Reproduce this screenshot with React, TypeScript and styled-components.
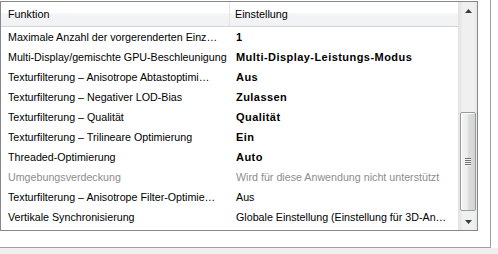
import React from "react";
import styled, { createGlobalStyle } from "styled-components";

const GlobalStyle = createGlobalStyle`
  html, body { margin: 0; padding: 0; background: #ffffff; }
  body { font-family: "Liberation Sans", Arial, sans-serif; }
`;

const Page = styled.div`
  width: 498px;
  height: 254px;
  display: flex;
  flex-direction: column;
  background: #ffffff;
  overflow: hidden;
`;

const Panel = styled.div`
  width: 491px;
  height: 248px;
  border-right: 1px solid #a0a0a0;
  border-bottom: 1px solid #a0a0a0;
  background: #ffffff;
  padding-top: 1px;
  box-sizing: border-box;
`;

const Footer = styled.div`
  flex: 1;
  background: #f0f0f0;
`;

const ListBox = styled.div`
  width: 478px;
  height: 230px;
  box-sizing: border-box;
  border: 1px solid #828790;
  display: flex;
  background: #ffffff;
`;

const Content = styled.div`
  flex: 1;
  display: flex;
  flex-direction: column;
  min-width: 0;
`;

const Header = styled.div`
  height: 25px;
  box-sizing: border-box;
  display: grid;
  grid-template-columns: 229px 1fr;
  background: linear-gradient(#ffffff 0%, #ffffff 45%, #f3f4f6 50%, #f1f2f4 100%);
  border-bottom: 1px solid #d5d5d5;
  font-size: 10.8px;
  color: #000;
`;

const HeaderCell = styled.div<{ $divider?: boolean }>`
  display: flex;
  align-items: center;
  padding-left: ${(p) => (p.$divider ? "7px" : "5px")};
  border-right: ${(p) => (p.$divider ? "1px solid #e3e5e8" : "none")};
  white-space: nowrap;
  overflow: hidden;
`;

const Row = styled.div<{ $disabled?: boolean }>`
  height: 20px;
  display: grid;
  grid-template-columns: 229px 1fr;
  font-size: 10.7px;
  color: ${(p) => (p.$disabled ? "#8d8d8d" : "#000000")};
`;

const Cell = styled.div<{ $bold?: boolean; $value?: boolean }>`
  display: flex;
  align-items: center;
  padding-left: ${(p) => (p.$value ? "6px" : "7px")};
  font-weight: ${(p) => (p.$bold ? 700 : 400)};
  letter-spacing: ${(p) => (p.$bold ? "0.45px" : "0")};
  font-size: ${(p) => (p.$bold ? "11px" : "inherit")};
  white-space: nowrap;
  overflow: hidden;
`;

const Scrollbar = styled.div`
  width: 18px;
  display: flex;
  flex-direction: column;
  background: linear-gradient(90deg, #e3e3e3 0%, #f0f0f0 20%, #f0f0f0 80%, #e8e8e8 100%);
  border-left: 1px solid #e3e3e3;
`;

const ArrowButton = styled.div`
  height: 17px;
  display: flex;
  align-items: center;
  justify-content: center;
`;

const Track = styled.div`
  flex: 1;
  position: relative;
`;

const Thumb = styled.div`
  position: absolute;
  left: 1px;
  right: 1px;
  border: 1px solid #999a9c;
  border-radius: 2px;
  background: linear-gradient(90deg, #f6f6f6 0%, #ececec 45%, #dcdcdc 55%, #d4d4d4 100%);
  box-shadow: inset 1px 1px 0 #ffffff;
  display: flex;
  align-items: center;
  justify-content: center;
`;

const Gripper = styled.div`
  width: 6px;
  display: flex;
  flex-direction: column;
  gap: 1px;
`;

const GripLine = styled.div`
  height: 1px;
  background: #707070;
  box-shadow: 0 1px 0 #f4f4f4;
`;

type Item = { name: string; value: string; bold?: boolean; disabled?: boolean };

const items: Item[] = [
  { name: "Maximale Anzahl der vorgerenderten Einz…", value: "1", bold: true },
  { name: "Multi-Display/gemischte GPU-Beschleunigung", value: "Multi-Display-Leistungs-Modus", bold: true },
  { name: "Texturfilterung – Anisotrope Abtastoptimi…", value: "Aus", bold: true },
  { name: "Texturfilterung – Negativer LOD-Bias", value: "Zulassen", bold: true },
  { name: "Texturfilterung – Qualität", value: "Qualität", bold: true },
  { name: "Texturfilterung – Trilineare Optimierung", value: "Ein", bold: true },
  { name: "Threaded-Optimierung", value: "Auto", bold: true },
  { name: "Umgebungsverdeckung", value: "Wird für diese Anwendung nicht unterstützt", disabled: true },
  { name: "Texturfilterung – Anisotrope Filter-Optimie…", value: "Aus" },
  { name: "Vertikale Synchronisierung", value: "Globale Einstellung (Einstellung für 3D-An…" },
];

const UpArrow = () => (
  <svg width="7" height="4" viewBox="0 0 7 4">
    <path d="M3.5 0 L7 4 L0 4 Z" fill="#3c3c3c" />
  </svg>
);

const DownArrow = () => (
  <svg width="7" height="4" viewBox="0 0 7 4">
    <path d="M0 0 L7 0 L3.5 4 Z" fill="#3c3c3c" />
  </svg>
);

export default function App() {
  return (
    <>
      <GlobalStyle />
      <Page>
        <Panel>
          <ListBox>
            <Content>
              <Header>
                <HeaderCell $divider>Funktion</HeaderCell>
                <HeaderCell>Einstellung</HeaderCell>
              </Header>
              {items.map((it) => (
                <Row key={it.name} $disabled={it.disabled}>
                  <Cell>{it.name}</Cell>
                  <Cell $value $bold={it.bold}>{it.value}</Cell>
                </Row>
              ))}
            </Content>
            <Scrollbar>
              <ArrowButton>
                <UpArrow />
              </ArrowButton>
              <Track>
                <Thumb style={{ top: 93, height: 97 }}>
                  <Gripper>
                    <GripLine />
                    <GripLine />
                    <GripLine />
                    <GripLine />
                  </Gripper>
                </Thumb>
              </Track>
              <ArrowButton>
                <DownArrow />
              </ArrowButton>
            </Scrollbar>
          </ListBox>
        </Panel>
        <Footer />
      </Page>
    </>
  );
}
